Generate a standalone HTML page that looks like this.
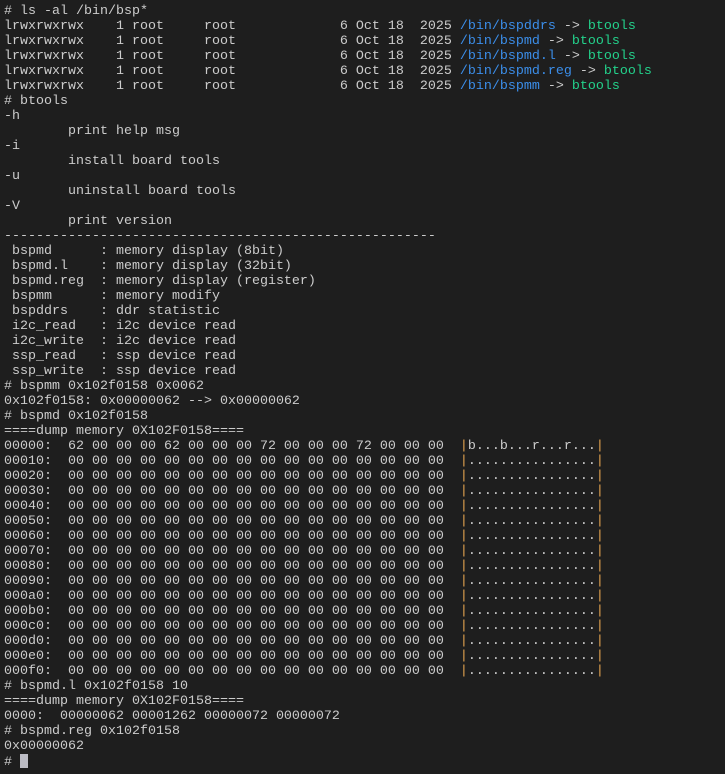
<!DOCTYPE html>
<html><head><meta charset="utf-8"><style>
html,body{margin:0;padding:0;background:#1e1e1e;width:725px;height:774px;overflow:hidden}
pre{margin:0;padding:4px 0 0 4px;font-family:"Liberation Mono","DejaVu Sans Mono",monospace;font-size:13.33px;line-height:15px;color:#cccccc;white-space:pre}
.b{color:#3b8eea}.g{color:#23d18b}.o{color:#e5a550}
.cur{display:inline-block;width:8px;height:14px;background:#bcbcc4;vertical-align:-3px}
</style></head><body><pre># ls -al /bin/bsp*
lrwxrwxrwx    1 root     root             6 Oct 18  2025 <span class="b">/bin/bspddrs</span> -&gt; <span class="g">btools</span>
lrwxrwxrwx    1 root     root             6 Oct 18  2025 <span class="b">/bin/bspmd</span> -&gt; <span class="g">btools</span>
lrwxrwxrwx    1 root     root             6 Oct 18  2025 <span class="b">/bin/bspmd.l</span> -&gt; <span class="g">btools</span>
lrwxrwxrwx    1 root     root             6 Oct 18  2025 <span class="b">/bin/bspmd.reg</span> -&gt; <span class="g">btools</span>
lrwxrwxrwx    1 root     root             6 Oct 18  2025 <span class="b">/bin/bspmm</span> -&gt; <span class="g">btools</span>
# btools
-h
        print help msg
-i
        install board tools
-u
        uninstall board tools
-V
        print version
------------------------------------------------------
 bspmd      : memory display (8bit)
 bspmd.l    : memory display (32bit)
 bspmd.reg  : memory display (register)
 bspmm      : memory modify
 bspddrs    : ddr statistic
 i2c_read   : i2c device read
 i2c_write  : i2c device read
 ssp_read   : ssp device read
 ssp_write  : ssp device read
# bspmm 0x102f0158 0x0062
0x102f0158: 0x00000062 --&gt; 0x00000062
# bspmd 0x102f0158
====dump memory 0X102F0158====
00000:  62 00 00 00 62 00 00 00 72 00 00 00 72 00 00 00  <span class="o">|</span>b...b...r...r...<span class="o">|</span>
00010:  00 00 00 00 00 00 00 00 00 00 00 00 00 00 00 00  <span class="o">|</span>................<span class="o">|</span>
00020:  00 00 00 00 00 00 00 00 00 00 00 00 00 00 00 00  <span class="o">|</span>................<span class="o">|</span>
00030:  00 00 00 00 00 00 00 00 00 00 00 00 00 00 00 00  <span class="o">|</span>................<span class="o">|</span>
00040:  00 00 00 00 00 00 00 00 00 00 00 00 00 00 00 00  <span class="o">|</span>................<span class="o">|</span>
00050:  00 00 00 00 00 00 00 00 00 00 00 00 00 00 00 00  <span class="o">|</span>................<span class="o">|</span>
00060:  00 00 00 00 00 00 00 00 00 00 00 00 00 00 00 00  <span class="o">|</span>................<span class="o">|</span>
00070:  00 00 00 00 00 00 00 00 00 00 00 00 00 00 00 00  <span class="o">|</span>................<span class="o">|</span>
00080:  00 00 00 00 00 00 00 00 00 00 00 00 00 00 00 00  <span class="o">|</span>................<span class="o">|</span>
00090:  00 00 00 00 00 00 00 00 00 00 00 00 00 00 00 00  <span class="o">|</span>................<span class="o">|</span>
000a0:  00 00 00 00 00 00 00 00 00 00 00 00 00 00 00 00  <span class="o">|</span>................<span class="o">|</span>
000b0:  00 00 00 00 00 00 00 00 00 00 00 00 00 00 00 00  <span class="o">|</span>................<span class="o">|</span>
000c0:  00 00 00 00 00 00 00 00 00 00 00 00 00 00 00 00  <span class="o">|</span>................<span class="o">|</span>
000d0:  00 00 00 00 00 00 00 00 00 00 00 00 00 00 00 00  <span class="o">|</span>................<span class="o">|</span>
000e0:  00 00 00 00 00 00 00 00 00 00 00 00 00 00 00 00  <span class="o">|</span>................<span class="o">|</span>
000f0:  00 00 00 00 00 00 00 00 00 00 00 00 00 00 00 00  <span class="o">|</span>................<span class="o">|</span>
# bspmd.l 0x102f0158 10
====dump memory 0X102F0158====
0000:  00000062 00001262 00000072 00000072
# bspmd.reg 0x102f0158
0x00000062
# <span class="cur"></span></pre></body></html>
